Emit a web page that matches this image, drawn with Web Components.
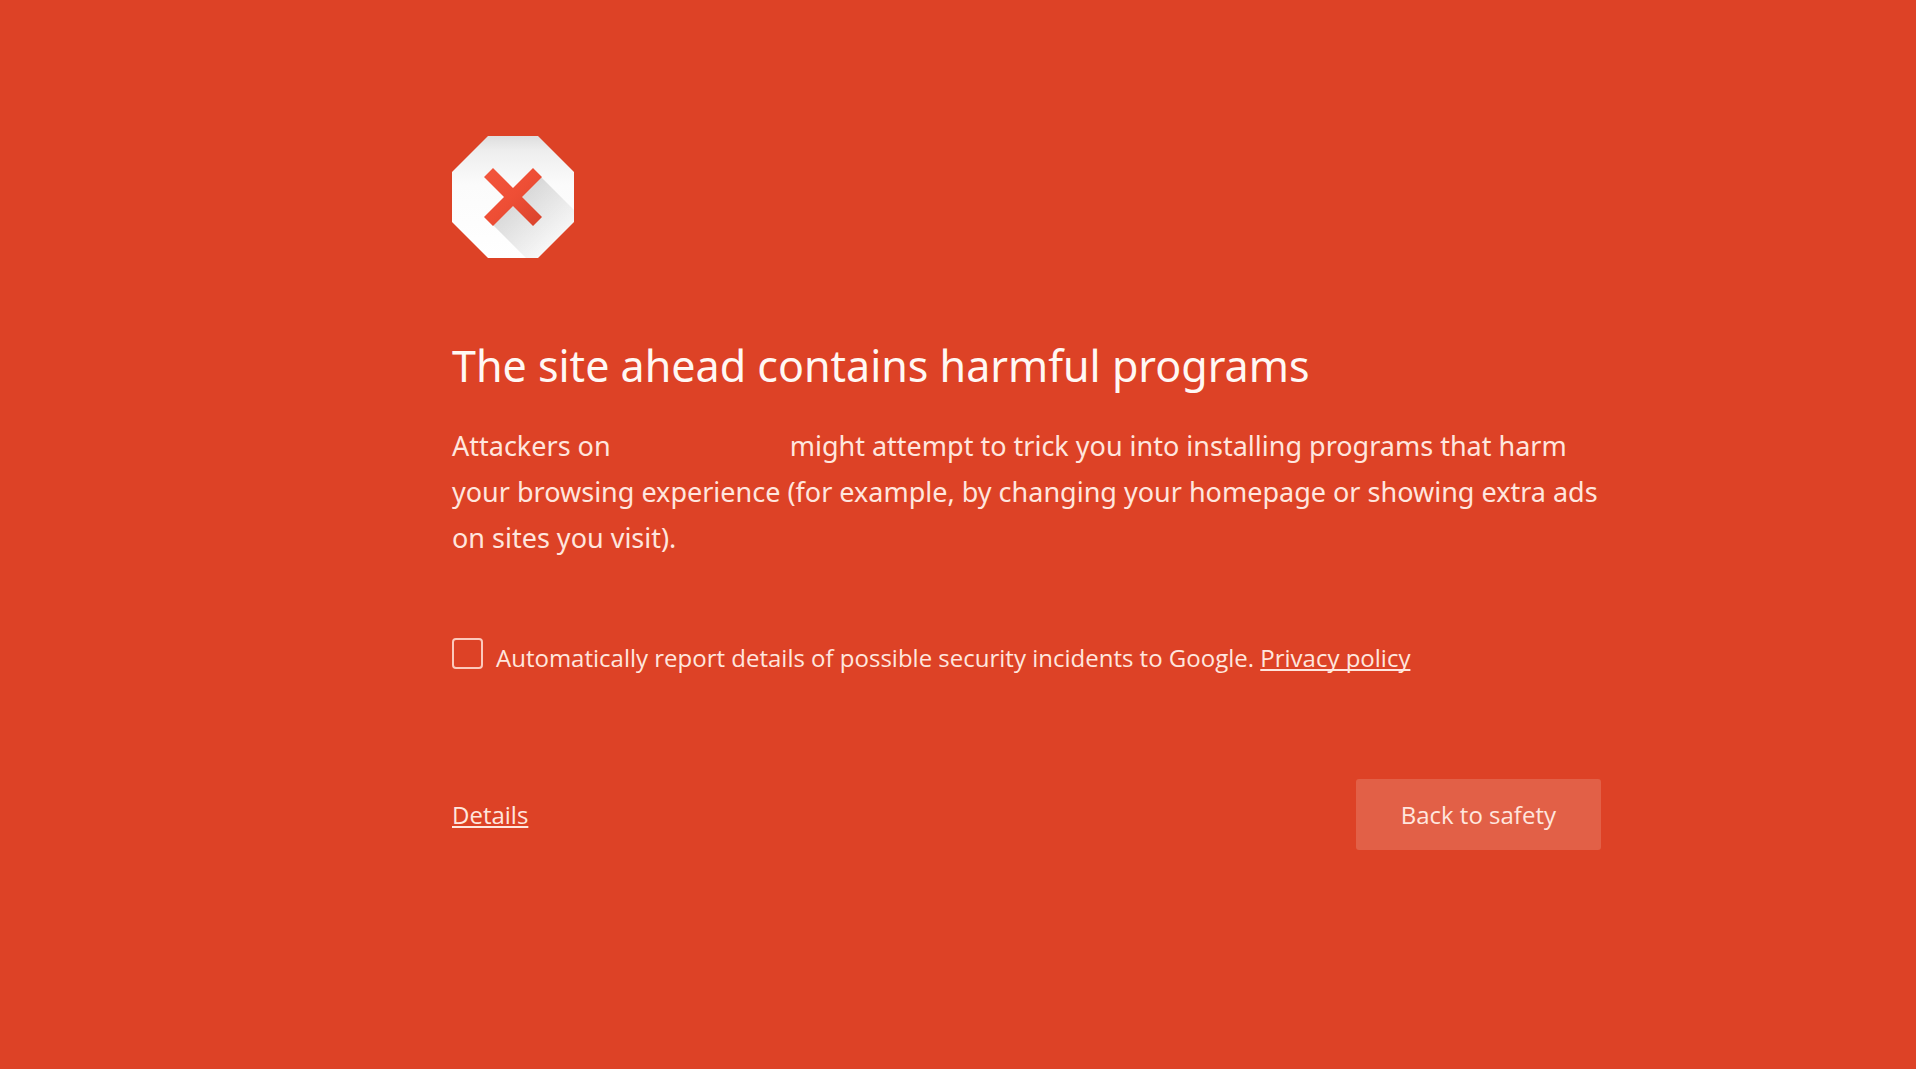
<!DOCTYPE html>
<html lang="en">
<head>
<meta charset="utf-8">
<meta name="viewport" content="width=device-width, initial-scale=1">
<title>Security error</title>
<style>
  html { background: #dd4226; }
  body { margin: 0; color: #ffe6de; font-family: "Open Sans", "Noto Sans", sans-serif; font-size: 24px; line-height: 34px; }
</style>
</head>
<body>
<warning-page></warning-page>

<script>
  const define = (name, html) => {
    const template = document.createElement('template');
    template.innerHTML = html;
    customElements.define(name, class extends HTMLElement {
      constructor() {
        super();
        this.attachShadow({ mode: 'open' }).append(template.content.cloneNode(true));
      }
    });
  };

  define('stop-icon', `
    <style>
      :host { display: block; width: 122px; height: 122px; }
      svg { display: block; width: 100%; height: 100%; }
    </style>
    <svg viewBox="0 0 122 122" aria-hidden="true">
      <defs>
        <linearGradient id="face" x1="0" y1="0" x2="0" y2="1">
          <stop offset="0" stop-color="#dedede"/>
          <stop offset=".12" stop-color="#eeeeee"/>
          <stop offset=".4" stop-color="#fbfbfb"/>
          <stop offset="1" stop-color="#ffffff"/>
        </linearGradient>
        <linearGradient id="shade" gradientUnits="userSpaceOnUse" x1="60" y1="60" x2="104" y2="104">
          <stop offset="0" stop-color="#000" stop-opacity=".15"/>
          <stop offset=".5" stop-color="#000" stop-opacity=".09"/>
          <stop offset="1" stop-color="#000" stop-opacity=".03"/>
        </linearGradient>
        <linearGradient id="cross" x1="0" y1="0" x2="1" y2="1">
          <stop offset="0" stop-color="#f2563d"/>
          <stop offset=".5" stop-color="#ee4e35"/>
          <stop offset="1" stop-color="#d8432c"/>
        </linearGradient>
        <clipPath id="edge"><path d="M36 0H86L122 36V86L86 122H36L0 86V36Z"/></clipPath>
      </defs>
      <g clip-path="url(#edge)">
        <path d="M0 0H122V122H0Z" fill="url(#face)"/>
        <path d="M89 41L130 82V130H82L41 89L61 61Z" fill="url(#shade)"/>
      </g>
      <path d="M41 32L61 52L81 32L90 41L70 61L90 81L81 90L61 70L41 90L32 81L52 61L32 41Z" fill="url(#cross)"/>
    </svg>`);

  define('warning-message', `
    <style>
      :host { display: block; }
      h1 { margin: 0; color: #fff8f4; font-family: "Noto Sans", sans-serif; font-size: 43px; line-height: 58px; font-weight: 400; }
      p { margin: 28px 0 0; font-family: "Noto Sans", sans-serif; font-size: 27px; line-height: 46px; }
    </style>
    <h1><slot name="title"></slot></h1>
    <p><slot></slot></p>`);

  define('report-option', `
    <style>
      :host { display: flex; align-items: flex-start; gap: 13px; }
      input {
        appearance: none; flex: none; box-sizing: border-box;
        width: 31px; height: 31px; margin: 0;
        border: 2px solid #fcc9bc; border-radius: 4px;
      }
      input:checked { background: #fcc9bc; }
      div { padding-top: 3px; }
      a { color: inherit; text-decoration-thickness: 2px; text-underline-offset: 2px; text-decoration-skip-ink: none; }
    </style>
    <input type="checkbox" id="report">
    <div><label for="report"><slot></slot></label> <a href="#privacy">Privacy policy</a></div>`);

  define('action-bar', `
    <style>
      :host { display: flex; align-items: center; justify-content: space-between; }
      a { color: inherit; text-decoration-thickness: 2px; text-underline-offset: 2px; text-decoration-skip-ink: none; }
      button {
        padding: 19px 45px 18px; border: 0; border-radius: 3px;
        background: #e26047; color: inherit; font: inherit; cursor: pointer;
      }
    </style>
    <a href="#details">Details</a>
    <button type="button">Back to safety</button>`);

  define('warning-page', `
    <style>
      :host { display: block; padding: 136px 315px 64px 452px; }
      main { display: flex; flex-direction: column; }
      warning-message { margin-top: 79px; }
      .site { display: inline-block; width: 165px; }
      report-option { margin-top: 77px; }
      action-bar { margin-top: 104px; }
      @media (max-width: 1400px) { :host { padding: 64px 8%; } }
    </style>
    <main>
      <stop-icon></stop-icon>
      <warning-message><span slot="title">The site ahead contains harmful programs</span>Attackers on <span class="site"></span> might attempt to trick you into installing programs that harm your browsing experience (for example, by changing your homepage or showing extra ads on sites you visit).</warning-message>
      <report-option>Automatically report details of possible security incidents to Google.</report-option>
      <action-bar></action-bar>
    </main>`);
</script>
</body>
</html>
